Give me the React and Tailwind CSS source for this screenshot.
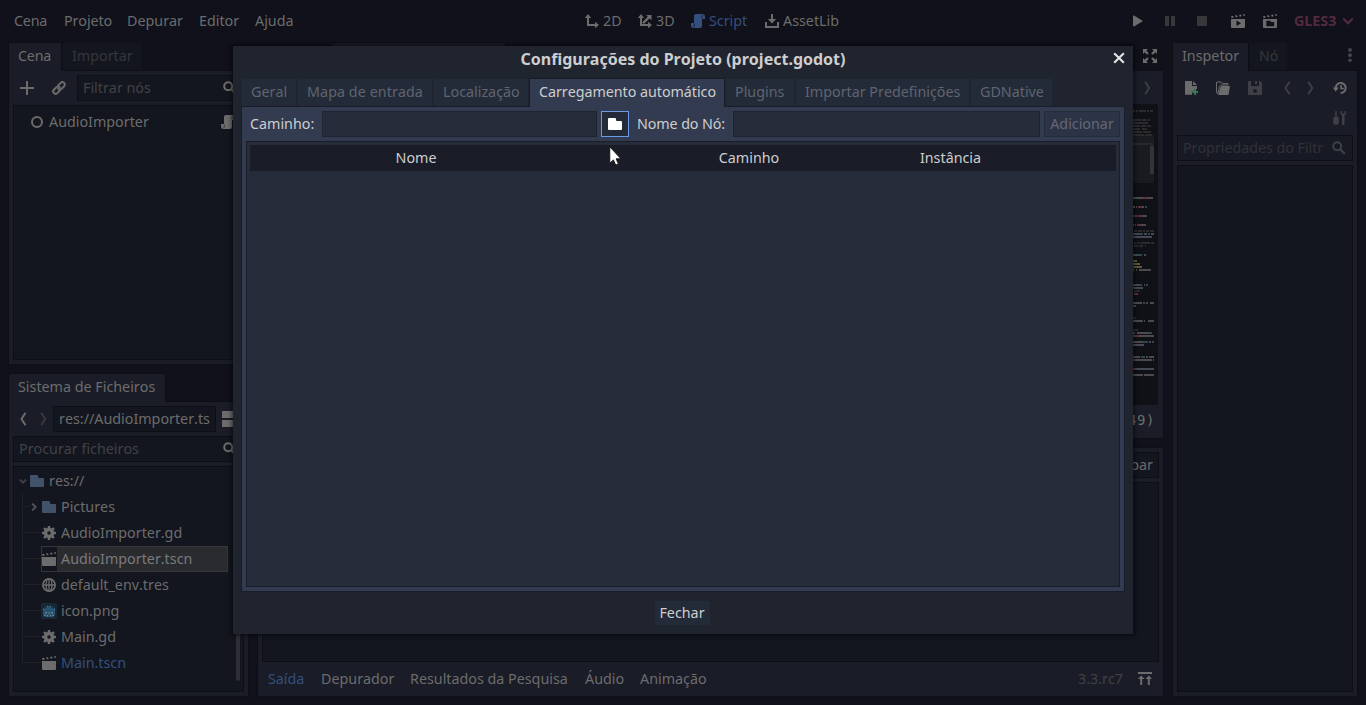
const fg = '#6c6c6d';

function Ico({ children, c = fg, className = '', s = 14, vb = '0 0 14 14' }) {
  return (
    <svg width={s} height={s} viewBox={vb} className={`shrink-0 ${className}`} fill={c} stroke="none">
      {children}
    </svg>
  );
}

const Search = ({ className, c }) => (
  <Ico className={className} c={c}>
    <circle cx="5.2" cy="5.200" r="4" fill="none" stroke={c || fg} strokeWidth="2" />
    <path d="M8.200 8.200l4.600 4.600" stroke={c || fg} strokeWidth="2.200" />
  </Ico>
);
const Folder = ({ c = '#42526a', className }) => (
  <Ico c={c} className={className}>
    <path d="M1 1h6a1 1 0 0 1 1 1v1a1 1 0 0 0 1 1h4a1 1 0 0 1 1 1v7a1 1 0 0 1-1 1H1a1 1 0 0 1-1-1V2a1 1 0 0 1 1-1z" />
  </Ico>
);
const Gear = () => (
  <Ico>
    <path fillRule="evenodd" d="M5.9 0h2.2l.3 2 1.1.5 1.7-1.2 1.5 1.5-1.2 1.7.5 1.1 2 .3v2.2l-2 .3-.5 1.1 1.2 1.7-1.5 1.5-1.7-1.2-1.1.5-.3 2H5.9l-.3-2-1.1-.5-1.7 1.2-1.5-1.5 1.2-1.7L2 8.400l-2-.3V5.900l2-.3.5-1.1-1.2-1.7 1.5-1.5 1.7 1.2L5.600 2zM7 5.200a1.8 1.8 0 1 0 0 3.600 1.8 1.8 0 0 0 0-3.600z" />
  </Ico>
);
const clapTop = 'M0 2.200l2-.4.8 1.700L.6 4zM4 1.600l1.900-.4.8 1.800-1.900.3zM8 .9l1.900-.3.8 1.700-1.900.4zM12 .2l1.600-.2.4 1.700-1.300.2z';
const Clap = () => (
  <Ico>
    <path d="M0 5h14v8a1 1 0 0 1-1 1H1a1 1 0 0 1-1-1z" />
    <path d={clapTop} />
  </Ico>
);
const Globe = () => (
  <Ico>
    <g fill="none" stroke={fg} strokeWidth="1.7">
      <circle cx="7" cy="7" r="6.100" />
      <ellipse cx="7" cy="7" rx="2.900" ry="6.100" strokeWidth="1.300" />
      <path d="M1 7h12M7 1v12" strokeWidth="1.300" />
    </g>
  </Ico>
);
const Godot = () => (
  <Ico s={16} vb="0 0 16 16" className="-mx-px">
    <rect width="16" height="16" rx="2" fill="#172936" />
    <path d="M2 5l2 1V4l2 1V2.500l1.500.5h1L10 2.500V5l2-1v2l2-1v7l-2 2H4l-2-2z" fill="#275372" />
    <path d="M2 6h1v1H2zM13 6h1v1h-1zM4 9h2v1.500H4zM10 9h2v1.500h-2zM7.500 9h1v2h-1zM3 12h2v1H3zM6 12h1v1.500H6zM9 12h1v1.500H9zM11 12h2v1h-2zM6 3h1v1H6zM9 3h1v1H9z" fill="#6b7982" />
  </Ico>
);
const Script = ({ c = fg, d = '#294166', className }) => (
  <Ico c={c} className={className}>
    <path d="M5 0C3.900 0 3 .9 3 2v7H0v2.500A2.500 2.500 0 0 0 2.500 14H9a2 2 0 0 0 2-2V5h3V2.500A2.500 2.500 0 0 0 11.500 0z" />
    <path d="M11 4.500V2.200A1 1 0 0 1 12 1.200M3.400 9.500V12a1 1 0 0 1-1 1" fill="none" stroke={d} strokeWidth=".9" />
  </Ico>
);
const Chev = ({ left, c = fg, className = '' }) => (
  <svg width="7" height="14" viewBox="0 0 7 14" className={`shrink-0 ${className}`}>
    <path d={left ? 'M5.500 .8L1.500 7l4 6.200' : 'M1.200 .8l4 6.200-4 6.200'} fill="none" stroke={c} strokeWidth="2" />
  </svg>
);

const menu = [
  ['Cena', 'w-[50px] tracking-[-0.2px]'],
  ['Projeto', 'w-[63px] tracking-[-0.1px]'],
  ['Depurar', 'w-[72px]'],
  ['Editor', 'w-14'],
  ['Ajuda', 'w-[330px]'],
];

function MenuBar() {
  return (
    <div className="flex h-[42px] items-center pl-[14px]">
      {menu.map(([t, w]) => (
        <span key={t} className={w}>{t}</span>
      ))}
      <div className="flex w-[53px] items-center gap-1">
        <Ico><path d="M3 0L6.200 4H4v6h6V7.800l4 3.200-4 3.200V12H2V4H-.2z" /></Ico>2D
      </div>
      <div className="flex w-[53px] items-center gap-1">
        <Ico>
          <path d="M3 0L6.200 4H4v6h6V7.800l4 3.200-4 3.200V12H2V4H-.2z" />
          <path d="M4.300 8.300L9.800 2.800 8.200 1H13.500v5.300L11.500 4.400 5.800 10z" />
        </Ico>
        3D
      </div>
      <div className="flex w-[74px] items-center gap-1 text-[#344f7d]">
        <Script c="#344f7d" d="#16202f" />Script
      </div>
      <div className="flex w-[366px] items-center gap-1">
        <Ico><path d="M6 0h2v5h3.200L7 9.500 2.800 5H6zM0 8h2v4h10V8h2v6H0z" /></Ico>AssetLib
      </div>
      <div className="flex w-[163px] items-center">
        <Ico className="mr-[18px]"><path d="M2 2v10a.6.6 0 0 0 1 .4l8.200-4.900a.6.6 0 0 0 0-1L3 1.600a.6.6 0 0 0-1 .4z" /></Ico>
        <Ico className="mr-[18px]" c="#38383b"><path d="M2 2h4v10H2zM8 2h4v10H8z" /></Ico>
        <Ico className="mr-[22px]" c="#38383b"><rect x="2" y="2" width="10" height="10" rx=".8" /></Ico>
        <Ico className="mr-[18px]">
          <path fillRule="evenodd" d="M0 5h14v8a1 1 0 0 1-1 1H1a1 1 0 0 1-1-1zM5.500 6.500v5.600L10 9.300z" />
          <path d={clapTop} />
        </Ico>
        <Ico>
          <path fillRule="evenodd" d="M0 5h14v8a1 1 0 0 1-1 1H1a1 1 0 0 1-1-1zM3.300 6.700v5.500h7.900V8H7.700V6.700z" />
          <path d={clapTop} />
        </Ico>
      </div>
      <span className="w-12 font-bold text-[#542a3e]">GLES3</span>
      <Ico c="none" s={12} vb="0 0 12 12"><path d="M1.200 3.500L6 8.300l4.800-4.800" stroke="#542a3e" strokeWidth="2" /></Ico>
    </div>
  );
}

const files = [
  ['AudioImporter.gd', Gear],
  ['AudioImporter.tscn', Clap, 'sel'],
  ['default_env.tres', Globe],
  ['icon.png', Godot],
  ['Main.gd', Gear],
  ['Main.tscn', Clap, 'blue'],
];

function LeftDock() {
  return (
    <div className="flex w-[241px] shrink-0 flex-col">
      <div className="flex h-7 shrink-0">
        <div className="z-10 -mb-px w-[54px] border border-b-0 border-[#0e0f15] bg-[#1a1c27] pt-[2px] pl-[9px] tracking-[-0.2px]">Cena</div>
        <div className="mt-px ml-px w-[78px] bg-[#13161e] pt-[2px] pl-[9px] text-[#34363d]">Importar</div>
      </div>
      <div className="flex h-[295px] shrink-0 flex-col border border-[#0e0f15] bg-[#1a1c27] p-1">
        <div className="flex h-[26px] shrink-0 items-center">
          <Ico className="mr-[18px] ml-[7px]"><path d="M6 0h2v6h6v2H8v6H6V8H0V6h6z" /></Ico>
          <Ico className="mr-[11px]">
            <g fill="none" stroke={fg} strokeWidth="2" strokeLinecap="round">
              <path d="M6.300 4.300l2.400-2.400a2.400 2.400 0 0 1 3.400 3.400L9.700 7.700a2.400 2.400 0 0 1-3.400 0" />
              <path d="M7.700 9.700l-2.400 2.400a2.400 2.400 0 0 1-3.400-3.400l2.400-2.400a2.400 2.400 0 0 1 3.400 0" />
            </g>
          </Ico>
          <div className="flex h-[26px] flex-1 items-center border border-[#0e0f15] bg-[#13161e] pl-[5px] text-[#414247]">
            <span className="w-[140px]">Filtrar nós</span>
            <Search />
          </div>
        </div>
        <div className="mt-1 flex-1 border border-[#0e0f15] bg-[#13161e] pt-[3px]">
          <div className="flex h-[26px] items-center pl-4">
            <Ico className="mr-[5px]"><circle cx="7" cy="7" r="5" fill="none" stroke={fg} strokeWidth="2" /></Ico>
            <span className="w-[172px]">AudioImporter</span>
            <Script d="#3a3b3e" />
          </div>
        </div>
      </div>
      <div className="mt-2 flex h-7 shrink-0">
        <div className="z-10 -mb-px w-[158px] border border-b-0 border-[#0e0f15] bg-[#1a1c27] pt-[2px] pl-[9px]">Sistema de Ficheiros</div>
      </div>
      <div className="flex h-[296px] shrink-0 flex-col border border-[#0e0f15] bg-[#1a1c27] p-1">
        <div className="flex h-[26px] shrink-0 items-center">
          <Chev left className="ml-[7px]" />
          <Chev c="#38393f" className="mr-[6px] ml-[13px]" />
          <div className="mr-[6px] flex h-[26px] w-[163px] items-center border border-[#0e0f15] bg-[#13161e] pl-[5px]">res://AudioImporter.ts</div>
          <Ico s={16} vb="0 0 16 16"><path d="M0 0h16v7H0zM0 9h16v7H0z" /></Ico>
        </div>
        <div className="mt-1 flex h-[26px] shrink-0 items-center border border-[#0e0f15] bg-[#13161e] pl-[5px] text-[#414247]">
          <span className="w-[204px]">Procurar ficheiros</span>
          <Search />
        </div>
        <div className="mt-1 flex flex-1 border border-[#0e0f15] bg-[#13161e] pt-[1px]">
          <div className="w-[215px]">
            <div className="flex h-[26px] items-center pl-[5px]">
              <Ico c="none" s={8} vb="0 0 8 8"><path d="M.8 2.500L4 5.700l3.200-3.200" stroke="#404146" strokeWidth="1.800" /></Ico>
              <Folder className="mr-[5px] ml-[3px]" />res://
            </div>
            <div className="relative flex h-[26px] items-center pl-4">
              <div className="absolute top-0 left-2 h-[13px] w-[7px] border-b border-l border-[#202229]" />
              <Ico c="none" s={8} vb="0 0 8 8"><path d="M2.200.6L5.600 4 2.200 7.400" stroke="#505156" strokeWidth="2" /></Ico>
              <Folder className="mr-[5px] ml-[4px]" />Pictures
            </div>
            {files.map(([t, I, k]) => (
              <div key={t} className="relative flex h-[26px] items-center pl-7">
                <div className="absolute -top-[13px] left-2 h-[26px] w-[19px] border-b border-l border-[#202229]" />
                {k === 'sel' && <div className="absolute top-0 left-[27px] h-[26px] w-[187px] border border-[#36373c] bg-[#2a2b2f]"><div className="h-full w-[15px] bg-[#13161e]" /></div>}
                <div className="relative flex items-center gap-[5px]">
                  <I />
                  <span className={k === 'blue' ? 'text-[#344f7d]' : k ? 'text-[#7a7a7b]' : ''}>{t}</span>
                </div>
              </div>
            ))}
          </div>
          <div className="mt-10 ml-[7px] h-[173px] w-1 rounded-full bg-[#2e2f34]" />
        </div>
      </div>
    </div>
  );
}

/* x, y, width, colour of every mark in the code overview */
const marks = [
  [0,110,2,0],[3,110,2,0],[6,110,7,0],[14,110,2,0],[17,110,3,0],
  [0,119,8,0],[9,119,5,0],[15,119,2,0],[0,122,15,0],[0,125,7,0],[8,125,5,0],[14,125,4,0],[0,128,7,0],[9,128,5,0],[0,131,9,0],[10,131,8,0],[0,134,11,0],[12,134,7,0],[0,143,9,0],[10,143,5,0],[16,143,4,0],
  [0,197,10,1],[10,197,4,2],[14,197,6,1],[0,206,2,4],[3,206,1,1],[5,206,4,2],[9,206,2,1],[12,206,2,3],
  [0,215,1,4],[2,215,2,1],[5,215,4,2],[9,215,5,5],[0,224,1,1],[2,224,1,3],[4,224,4,2],[8,224,5,1],
  [1,230,3,0],[5,230,4,0],[10,230,2,0],[13,230,3,0],[17,230,4,0],[0,233,6,5],[6,233,4,3],[11,233,3,5],[15,233,2,3],[18,233,3,5],[0,236,19,5],
  [1,242,2,0],[4,242,2,0],[7,242,10,0],[18,242,3,0],[1,245,4,0],[6,245,4,0],[12,245,1,0],[0,254,5,1],[5,254,4,3],[11,254,2,5],
  [0,260,4,4],[0,263,7,4],[0,266,9,4],[0,269,1,1],[3,269,1,1],[6,269,12,1],[0,284,6,1],[6,284,3,3],[11,284,1,5],[13,284,2,3],[0,287,10,5],[1,290,6,0],[1,293,4,2],
  [0,302,9,1],[10,302,2,3],[13,302,2,5],[17,302,1,1],[18,302,3,1],[0,305,3,5],[0,317,3,0],[0,320,9,1],[9,320,1,3],[11,320,1,5],[15,320,6,1],[0,329,5,0],[0,332,2,1],[4,332,12,1],[16,332,3,3],[0,335,2,1],[2,335,4,2],[6,335,15,1],
  [0,341,10,1],[10,341,5,3],[16,341,2,5],[19,341,2,3],[0,344,11,5],[0,356,7,1],[8,356,4,3],[13,356,2,5],[16,356,5,1],[0,359,2,2],[2,359,17,1],[20,359,1,5],[0,368,2,2],[2,368,19,5],[0,374,10,1],[11,374,10,1],
];
const markColors = ['#2b2b2e', '#4b4b4e', '#632f38', '#2b494c', '#5d5638', '#454855'];

function Center() {
  return (
    <div className="ml-2 flex w-[907px] shrink-0 flex-col">
      <div className="flex h-7 items-start">
        <div className="ml-[74px] h-7 w-[175px] border border-b-0 border-[#0e0f15] bg-[#1a1c27]" />
        <Ico className="mt-[7px] ml-[637px]">
          <path d="M0 0h5L3.300 1.700 5.800 4.200 4.200 5.800 1.700 3.300 0 5zM14 0H9l1.700 1.700-2.500 2.500 1.600 1.600 2.500-2.500L14 5zM0 14h5l-1.700-1.700 2.500-2.500-1.600-1.600-2.500 2.500L0 9zM14 14H9l1.700-1.700-2.500-2.500 1.600-1.600 2.500 2.500L14 9z" />
        </Ico>
      </div>
      <div className="flex h-[369px] shrink-0 flex-col items-end border border-[#0e0f15] bg-[#1a1c27]">
        <div className="flex h-[33px] w-full items-center justify-end pr-[12px]"><Chev c="#3d3e44" /></div>
        <div className="mr-[5px] flex h-[301px] w-[600px] justify-end bg-[#101116]">
          <svg width="25" height="301" viewBox="0 0 25 301" shapeRendering="crispEdges">
            <rect x="0" y="31" width="21" height="48" fill="#1a1b20" />
            <rect x="17" y="42" width="4" height="28" fill="#333439" />
            {marks.map(([x, y, w, c]) => (
              <rect key={`${x}-${y}`} x={x} y={y - 104} width={w} height="2" fill={markColors[c]} />
            ))}
          </svg>
        </div>
        <div className="pt-[5px] pr-[8px] font-['DejaVu_Sans_Mono',monospace] text-[14px] leading-5 tracking-[0.6px]">( 21, 49)</div>
      </div>
      <div className="mt-2 flex h-[250px] shrink-0 flex-col border border-[#0e0f15] bg-[#1a1c27] px-1 pt-1">
        <div className="flex h-[26px] shrink-0 justify-end">
          <div className="flex h-[26px] items-center border border-[#0e0f15] bg-[#13161e] px-[5px]">Limpar</div>
        </div>
        <div className="mt-1 h-[180px] shrink-0 border border-[#0e0f15] bg-[#13161e]" />
        <div className="flex h-[34px] items-center pl-[6px]">
          <span className="w-[53px] text-[#344f7d]">Saída</span>
          <span className="w-[89px]">Depurador</span>
          <span className="w-[175px]">Resultados da Pesquisa</span>
          <span className="w-[55px]">Áudio</span>
          <span className="w-[438px]">Animação</span>
          <span className="w-[60px] text-[#414247]">3.3.rc7</span>
          <Ico><path d="M0 0h14v2H0zM3.200 3.500L6.500 7H4.200v6h-2V7h-2.300zM10.800 3.500L14 7h-2.200v6h-2V7H7.500z" /></Ico>
        </div>
      </div>
    </div>
  );
}

function Inspector() {
  return (
    <div className="ml-2 flex w-[186px] shrink-0 flex-col">
      <div className="flex h-7 shrink-0">
        <div className="z-10 -mb-px w-[77px] border border-b-0 border-[#0e0f15] bg-[#1a1c27] pt-[2px] pl-[9px]">Inspetor</div>
        <div className="mt-px ml-px w-[37px] bg-[#13161e] pt-[2px] pl-[9px] text-[#34363d]">Nó</div>
        <Ico c="#48484b" className="mt-[6px] ml-[56px]"><circle cx="7" cy="1.900" r="1.900" /><circle cx="7" cy="7.200" r="1.900" /><circle cx="7" cy="12.300" r="1.700" /></Ico>
      </div>
      <div className="flex h-[627px] shrink-0 flex-col border border-[#0e0f15] bg-[#1a1c27] p-1">
        <div className="flex h-[26px] shrink-0 items-center pl-2">
          <Ico className="mr-[17px]">
            <path d="M0 0h7v5h5v3H9v2H7v3.800H0zM8 0l4 4H8z" />
            <path d="M9.200 7.800h1.900v2.200H13v2h-1.900v2H9.200v-2H7.300v-2h1.900z" fill="#387a52" />
          </Ico>
          <Ico className="mr-[18px]">
            <path d="M1 1h4l1.500 1.500H12V4H5.500C4 4 3.500 5 3.300 6L2 12.500H1.200L.5 11V2z" fill="none" stroke={fg} />
            <path d="M5.500 5H14l-1.300 8a1 1 0 0 1-1 1H2.200L4.500 6a1.200 1.200 0 0 1 1-1z" />
          </Ico>
          <Ico c="#3e4045" className="mr-[22px]">
            <path fillRule="evenodd" d="M1 0h11l2 2v11a1 1 0 0 1-1 1H1a1 1 0 0 1-1-1V1a1 1 0 0 1 1-1zM3 0v5h8V0H9v3H7V0zM7 8a2 2 0 1 0 0 4 2 2 0 0 0 0-4z" />
          </Ico>
          <Chev left c="#3d3e44" className="mr-[16px]" />
          <Chev c="#3d3e44" className="mr-[19px]" />
          <Ico>
            <path d="M2.800 8A5 5 0 1 1 7.700 12" fill="none" stroke={fg} strokeWidth="2" />
            <path d="M-.2 6.500h5.900L2.700 10.700zM7.200 4h1.600v2.700h2v1.600H7.200z" />
          </Ico>
        </div>
        <div className="flex h-[34px] shrink-0 items-center justify-end pr-[6px]">
          <Ico c="#3e4045">
            <path d="M2.300 0h1.500v6H5.500l.4 5a2.800 2.800 0 0 1-5.700 0L.6 6h1.700zM7.500 0v3l1.500 1.400V13a1.200 1.200 0 0 0 2.500 0V4.400L13 3V0h-1.300v2.600H8.800V0z" />
          </Ico>
        </div>
        <div className="flex h-[26px] shrink-0 items-center border border-[#0e0f15] bg-[#171a24] pl-[5px] text-[#303138]">
          <span className="w-[149px] tracking-[-0.03px]">Propriedades do Filtr</span>
          <Search c="#3e4045" />
        </div>
        <div className="mt-1 flex-1 border border-[#0e0f15] bg-[#13161e]" />
      </div>
    </div>
  );
}

const tabs = [
  ['Geral', 'w-[54px] mr-[2px]'],
  ['Mapa de entrada', 'w-[134px] mr-[2px] tracking-[0.07px]'],
  ['Localização', 'w-[94px] mr-px'],
  ['Carregamento automático', 'on'],
  ['Plugins', 'w-[68px] mr-[2px] ml-px'],
  ['Importar Predefinições', 'w-[173px] mr-[2px]'],
  ['GDNative', 'w-[81px]'],
];

function Dialog() {
  return (
    <div className="absolute top-[46px] left-[233px] z-20 flex h-[588px] w-[900px] flex-col bg-[#20242f] text-[#cdcecf] shadow-[0_0_4px_2px_rgba(0,0,0,0.45)]">
      <div className="flex h-8 shrink-0 items-start">
        <h1 className="w-full pt-[2px] text-center text-[16px] leading-[22px] font-bold">Configurações do Projeto (project.godot)</h1>
        <svg width="12" height="12" viewBox="0 0 12 12" className="absolute top-[6px] right-2"><path d="M1.200 1.200l9.600 9.600M10.800 1.200l-9.600 9.600" stroke="#e4e5e5" strokeWidth="2.100" /></svg>
      </div>
      <div className="flex h-[28px] shrink-0 pl-[9px]">
        {tabs.map(([t, w]) =>
          w === 'on' ? (
            <div key={t} className="z-10 -mb-px w-[196px] border border-b-0 border-[#1a1c27] bg-[#333b50] pt-[2px] pl-[9px] tracking-[-0.04px]">{t}</div>
          ) : (
            <div key={t} className={`mt-px h-[27px] bg-[#242b38] pt-[2px] pl-[9px] text-[#5f6470] ${w}`}>{t}</div>
          ),
        )}
      </div>
      <div className="mr-2 ml-2 flex h-[486px] shrink-0 flex-col border border-[#1a1c27] bg-[#333b50] p-1">
        <div className="flex h-[26px] shrink-0 items-center">
          <span className="w-[76px] pl-1">Caminho:</span>
          <div className="h-[26px] w-[275px] border border-[#1f2430] bg-[#262c39]" />
          <div className="ml-1 flex h-[26px] w-7 items-center justify-center border border-[#699ce8] bg-[#242a37]"><Folder c="#ffffff" /></div>
          <span className="w-[104px] pl-2 tracking-[-0.1px]">Nome do Nó:</span>
          <div className="h-[26px] w-[307px] border border-[#1f2430] bg-[#262c39]" />
          <div className="ml-1 flex h-[26px] w-[76px] items-center justify-center border border-[#262b3a] bg-[#2d3347] text-[#646876]">Adicionar</div>
        </div>
        <div className="mt-1 flex-1 border border-[#1a1c27] bg-[#262c39] px-[3px] pt-[3px]">
          <div className="flex h-[26px] items-center bg-[#1a1c27] text-center">
            <span className="w-[332px]">Nome</span>
            <span className="w-[334px]">Caminho</span>
            <span className="w-[69px]">Instância</span>
          </div>
        </div>
      </div>
      <div className="flex justify-center pt-[9px] pr-[2px]">
        <button className="h-6 w-[55px] bg-[#242b38] leading-6">Fechar</button>
      </div>
    </div>
  );
}

export default function App() {
  return (
    <div className="relative h-[705px] w-[1366px] overflow-hidden bg-[#10111a] font-['Noto_Sans',sans-serif] text-[14.3px] leading-[22px] whitespace-nowrap text-[#6c6c6d] [font-kerning:none]">
      <MenuBar />
      <div className="flex pl-2">
        <LeftDock />
        <Center />
        <Inspector />
      </div>
      <Dialog />
      <svg width="14" height="21" viewBox="0 0 14 21" className="absolute top-[146px] left-[608px] z-30">
        <path d="M1.800.8v16.400l3.600-3.300 2.300 5.200 2.700-1.200-2.300-5.100h4.800z" fill="#fff" stroke="#111" strokeWidth=".9" />
      </svg>
    </div>
  );
}
